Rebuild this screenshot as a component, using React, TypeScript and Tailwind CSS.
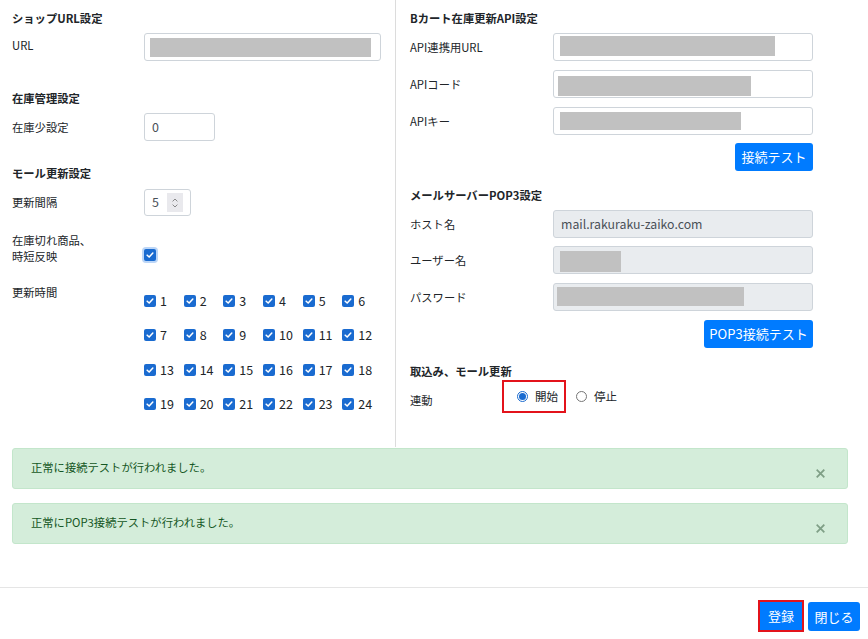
import React from "react";

const font = { fontFamily: '"Noto Sans CJK JP", "Noto Sans", "Liberation Sans", sans-serif' };

const Bar = ({ ml, mt, w, h }: { ml: number; mt: number; w: number; h: number }) => (
  <div className="bg-[#c1c1c1] shrink-0" style={{ marginLeft: ml, marginTop: mt, width: w, height: h }} />
);

const Heading = ({ children, className = "" }: { children: React.ReactNode; className?: string }) => (
  <div className={`h-4 leading-4 text-[11.3px] font-bold text-[#212529] ${className}`}>{children}</div>
);

const Check = ({ ring = false }: { ring?: boolean }) => (
  <span className={`inline-flex w-[12px] h-[12px] rounded-[2px] bg-[#1a6bd0] items-center justify-center shrink-0 ${ring ? "shadow-[0_0_0_2px_#bcd6f7]" : ""}`}>
    <svg viewBox="0 0 12 12" className="w-[10px] h-[10px]">
      <path d="M2.6 6.2 L5 8.5 L9.4 3.6" fill="none" stroke="white" strokeWidth="1.8" strokeLinecap="round" strokeLinejoin="round" />
    </svg>
  </span>
);

const Radio = ({ checked }: { checked?: boolean }) =>
  checked ? (
    <span className="inline-flex w-[11px] h-[11px] rounded-full border border-[#1a6bd0] items-center justify-center shrink-0">
      <span className="w-[7px] h-[7px] rounded-full bg-[#1a6bd0]" />
    </span>
  ) : (
    <span className="inline-block w-[11px] h-[11px] rounded-full border border-[#767676] bg-white shrink-0" />
  );

const BlueButton = ({ children, className = "" }: { children: React.ReactNode; className?: string }) => (
  <div className={`bg-[#007bff] text-white text-[13px] rounded-[3px] flex items-center justify-center ${className}`}>{children}</div>
);

const CloseX = () => (
  <svg viewBox="0 0 10 10" className="w-[9px] h-[9px] mt-[9px]">
    <path d="M1.5 1.5 L8.5 8.5 M8.5 1.5 L1.5 8.5" stroke="#7f9f86" strokeWidth="2" strokeLinecap="square" />
  </svg>
);

export default function App() {
  const hours = Array.from({ length: 24 }, (_, i) => i + 1);
  return (
    <div className="w-[868px] h-[639px] bg-white text-[#212529] overflow-hidden" style={font}>
      {/* two columns */}
      <div className="flex h-[447px]">
        {/* left */}
        <div className="w-[396px] border-r border-[#dcdcdc] pl-3 pt-[10px]">
          <Heading>ショップURL設定</Heading>
          <div className="flex mt-[7px] h-[28px]">
            <div className="w-[132px] text-[11.3px] pt-[4px]">URL</div>
            <div className="w-[237px] h-[28px] border border-[#ced4da] rounded-[3px] flex">
              <Bar ml={5} mt={4} w={221} h={19} />
            </div>
          </div>

          <Heading className="mt-[29px]">在庫管理設定</Heading>
          <div className="flex mt-[7px] h-[28px]">
            <div className="w-[132px] text-[11.3px] leading-[28px]">在庫少設定</div>
            <div className="w-[71px] h-[28px] border border-[#ced4da] rounded-[3px] text-[12.5px] leading-[26px] pl-[7px] text-[#495057]">0</div>
          </div>

          <Heading className="mt-[24px]">モール更新設定</Heading>
          <div className="flex mt-[8px] h-[27px]">
            <div className="w-[132px] text-[11.3px] leading-[27px]">更新間隔</div>
            <div className="w-[47px] h-[27px] border border-[#ced4da] rounded-[3px] flex items-center">
              <span className="text-[12.5px] text-[#495057] pl-[7px] w-[22px]">5</span>
              <span className="w-[16px] h-[19px] bg-[#e9e9ed] flex items-center justify-center">
                <svg viewBox="0 0 10 14" className="w-[8px] h-[12px]">
                  <path d="M2 5 L5 2 L8 5 M2 9 L5 12 L8 9" fill="none" stroke="#707070" strokeWidth="1" />
                </svg>
              </span>
            </div>
          </div>

          <div className="flex mt-[16px]">
            <div className="w-[132px] text-[11.3px] leading-4">
              在庫切れ商品、
              <br />
              時短反映
            </div>
            <div className="pt-[9px]">
              <Check ring />
            </div>
          </div>

          <div className="flex mt-[18px]">
            <div className="w-[132px] text-[11.3px] leading-4 pt-[1px]">更新時間</div>
            <div className="grid grid-cols-6 w-[238px]">
              {hours.map((h) => (
                <div key={h} className="h-[34.5px] flex items-center gap-[4px] text-[12.5px] pt-[1px]">
                  <Check />
                  <span className="leading-none">{h}</span>
                </div>
              ))}
            </div>
          </div>
        </div>

        {/* right */}
        <div className="pl-[14px] pt-[10px]">
          <Heading>Bカート在庫更新API設定</Heading>
          <div className="flex mt-[7px] h-[28px]">
            <div className="w-[143px] text-[11.3px] leading-[28px]">API連携用URL</div>
            <div className="w-[260px] h-[28px] border border-[#ced4da] rounded-[3px] flex">
              <Bar ml={6} mt={2} w={215} h={20} />
            </div>
          </div>
          <div className="flex mt-[9px] h-[28px]">
            <div className="w-[143px] text-[11.3px] leading-[28px]">APIコード</div>
            <div className="w-[260px] h-[28px] border border-[#ced4da] rounded-[3px] flex">
              <Bar ml={4} mt={5} w={193} h={20} />
            </div>
          </div>
          <div className="flex mt-[9px] h-[28px]">
            <div className="w-[143px] text-[11.3px] leading-[28px]">APIキー</div>
            <div className="w-[260px] h-[28px] border border-[#ced4da] rounded-[3px] flex">
              <Bar ml={6} mt={4} w={181} h={18} />
            </div>
          </div>
          <div className="flex justify-end w-[403px] mt-[8px]">
            <BlueButton className="w-[78px] h-[28px]">接続テスト</BlueButton>
          </div>

          <Heading className="mt-[16px]">メールサーバーPOP3設定</Heading>
          <div className="flex mt-[7px] h-[28px]">
            <div className="w-[143px] text-[11.3px] leading-[28px]">ホスト名</div>
            <div className="w-[260px] h-[28px] border border-[#ced4da] bg-[#e9ecef] rounded-[3px] text-[12.3px] leading-[26px] pl-[7px] text-[#495057]">
              mail.rakuraku-zaiko.com
            </div>
          </div>
          <div className="flex mt-[8px] h-[28px]">
            <div className="w-[143px] text-[11.3px] leading-[28px]">ユーザー名</div>
            <div className="w-[260px] h-[28px] border border-[#ced4da] bg-[#e9ecef] rounded-[3px] flex">
              <Bar ml={6} mt={4} w={61} h={21} />
            </div>
          </div>
          <div className="flex mt-[9px] h-[28px]">
            <div className="w-[143px] text-[11.3px] leading-[28px]">パスワード</div>
            <div className="w-[260px] h-[28px] border border-[#ced4da] bg-[#e9ecef] rounded-[3px] flex">
              <Bar ml={3} mt={3} w={187} h={19} />
            </div>
          </div>
          <div className="flex justify-end w-[403px] mt-[9px]">
            <BlueButton className="w-[109px] h-[28px]">POP3接続テスト</BlueButton>
          </div>

          <Heading className="mt-[15px]">取込み、モール更新</Heading>
          <div className="flex mt-[1px] h-[33px]">
            <div className="w-[92px] text-[11.3px] pt-[12px] leading-4">連動</div>
            <div className="w-[64px] h-[33px] border-2 border-[#e3131b] flex items-center pl-[13px] gap-[7px] text-[11.5px]">
              <Radio checked />
              <span>開始</span>
            </div>
            <div className="flex items-center pl-[10px] gap-[7px] text-[11.5px]">
              <Radio />
              <span>停止</span>
            </div>
          </div>
        </div>
      </div>

      {/* alerts */}
      <div className="px-3 mt-[1px] w-[860px]">
        <div className="h-[41px] bg-[#d4edda] border border-[#c3e6cb] rounded-[3px] flex items-center justify-between pl-[18px] pr-[22px] text-[#155724] text-[11.3px]">
          <span className="-mt-[2px]">正常に接続テストが行われました。</span>
          <CloseX />
        </div>
        <div className="h-[41px] mt-[14px] bg-[#d4edda] border border-[#c3e6cb] rounded-[3px] flex items-center justify-between pl-[18px] pr-[22px] text-[#155724] text-[11.3px]">
          <span className="-mt-[2px]">正常にPOP3接続テストが行われました。</span>
          <CloseX />
        </div>
      </div>

      {/* footer */}
      <div className="mt-[43px] border-t border-[#e5e5e5] flex justify-end pr-[8px] pt-[12px] items-start">
        <div className="border-2 border-[#e3131b] w-[46px] h-[32px]">
          <BlueButton className="w-full h-full rounded-none">登録</BlueButton>
        </div>
        <BlueButton className="w-[52px] h-[29px] ml-[4px] mt-[2px]">閉じる</BlueButton>
      </div>
    </div>
  );
}
